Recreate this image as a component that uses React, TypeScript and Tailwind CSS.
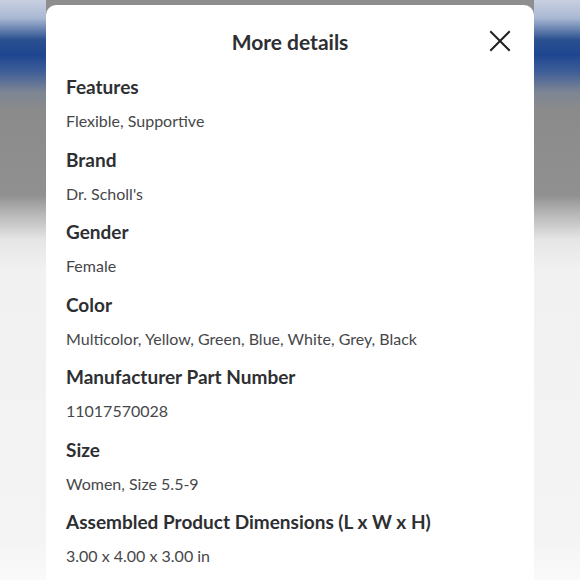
const details = [
  { label: 'Features', value: 'Flexible, Supportive' },
  { label: 'Brand', value: "Dr. Scholl's" },
  { label: 'Gender', value: 'Female' },
  { label: 'Color', value: 'Multicolor, Yellow, Green, Blue, White, Grey, Black' },
  { label: 'Manufacturer Part Number', value: '11017570028' },
  { label: 'Size', value: 'Women, Size 5.5-9' },
  { label: 'Assembled Product Dimensions (L x W x H)', value: '3.00 x 4.00 x 3.00 in' },
];

function CloseIcon() {
  return (
    <svg width="24" height="24" viewBox="0 0 24 24" fill="none" stroke="#1f1f21" strokeWidth="2" strokeLinecap="square">
      <path d="M3 3L21 21M21 3L3 21" />
    </svg>
  );
}

export default function App() {
  return (
    <div
      className="h-[580px] w-[580px] overflow-hidden flex justify-center bg-[linear-gradient(to_bottom,#c8d0e0_0px,#a9b8d3_18px,#2a508f_40px,#1e4690_55px,#3f5f98_72px,#7d8594_92px,#8b8b8b_110px,#909090_195px,#b9b9b9_215px,#e6e6e6_240px,#f1f1f1_270px,#f4f4f4_540px,#fafafa_580px)] font-['Lato','Liberation_Sans',sans-serif]"
    >
      <div className="w-[488px] bg-[#8e8e8e] pt-[5px] flex flex-col">
        <div className="flex-1 bg-white rounded-t-[10px] px-5">
          <div className="relative flex justify-center pt-[22px]">
            <h1 className="text-[21px] leading-[30px] font-bold text-[#2e2f32]">More details</h1>
            <button className="absolute right-[2px] top-[24px] text-[#1f1f21]">
              <CloseIcon />
            </button>
          </div>
          <div className="pt-[18px] flex flex-col">
            {details.map((d) => (
              <div key={d.label} className="mb-[14.5px]">
                <div className="text-[19px] leading-[24px] font-bold text-[#2e2f32]">{d.label}</div>
                <div className="mt-[10px] text-[16px] leading-[24px] text-[#46474a]">{d.value}</div>
              </div>
            ))}
          </div>
        </div>
      </div>
    </div>
  );
}
